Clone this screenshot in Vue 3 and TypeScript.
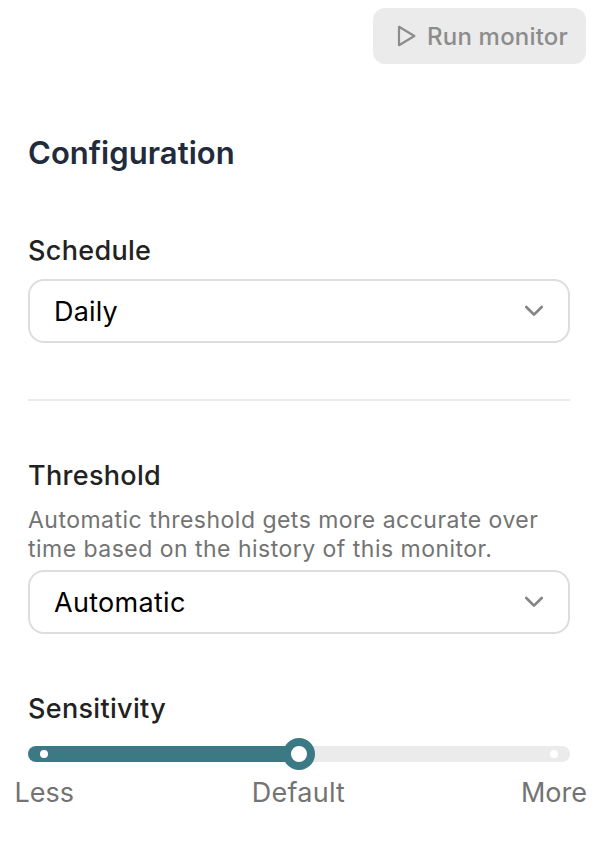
<script setup lang="ts">
import { ref } from 'vue'

const schedule = ref('Daily')
const threshold = ref('Automatic')
const sensitivity = ref(50)
</script>

<template>
  <main class="page">
    <header class="toolbar">
      <button class="run" disabled>
        <svg class="play" viewBox="0 0 20 24"><path d="M3 2.8V21.2L18.4 12Z" /></svg>
        <span class="run-label">Run monitor</span>
      </button>
    </header>
    <section class="config">
      <h1><span>Configuration</span></h1>
      <h2 class="schedule-title"><span>Schedule</span></h2>
      <button class="select">
        <span class="daily">{{ schedule }}</span>
        <svg class="chevron" viewBox="0 0 20 12"><path d="M2.3 2L10 9.6L17.7 2" /></svg>
      </button>
      <hr />
      <h2 class="threshold-title"><span>Threshold</span></h2>
      <p><span class="line-one">Automatic threshold gets more accurate over</span><br /><span class="line-two">time based on the history of this monitor.</span></p>
      <button class="select">
        <span class="automatic">{{ threshold }}</span>
        <svg class="chevron" viewBox="0 0 20 12"><path d="M2.3 2L10 9.6L17.7 2" /></svg>
      </button>
      <h2 class="sensitivity-title"><span>Sensitivity</span></h2>
      <div class="slider">
        <div class="track"><div class="fill" :style="{ width: sensitivity + '%' }"></div></div>
        <i class="dot start"></i><i class="dot end"></i>
        <i class="thumb" :style="{ left: sensitivity + '%' }"></i>
      </div>
      <div class="labels"><span class="less">Less</span><span class="default">Default</span><span class="more">More</span></div>
    </section>
  </main>
</template>

<style>
body { background: #fff; }
</style>

<style scoped>
* { box-sizing: border-box; }
.page { width: 610px; height: 856px; padding-top: 8px; overflow: hidden; font-family: Inter, sans-serif; }
.toolbar { display: flex; justify-content: flex-end; padding-right: 24px; }
button { font-family: inherit; margin: 0; }
.run { width: 213px; height: 56px; display: flex; align-items: center; padding: 0 0 0 23px; border: 0; border-radius: 12px; background: #ebebeb; color: #8c8c8c; font-size: 24px; font-weight: 500; letter-spacing: 0.2px; white-space: nowrap; }
.play { width: 20px; height: 24px; margin-right: 11px; fill: none; stroke: #8c8c8c; stroke-width: 2.2; stroke-linejoin: round; }
.config { width: 542px; margin-left: 28px; }
h1 { margin: 69px 0 0; font-size: 31px; line-height: 40px; font-weight: 600; color: #222b3b; }
h1 span { letter-spacing: 0.05px; }
h2 { margin: 0; font-size: 27px; line-height: 34px; font-weight: 500; letter-spacing: 0.32px; color: #222; }
.schedule-title { margin-top: 61px; }
.select { width: 542px; height: 64px; display: flex; align-items: center; justify-content: space-between; padding: 0 24px; border: 2px solid #ddd; border-radius: 16px; background: #fff; color: #000; font-size: 27px; }
.daily { letter-spacing: 0.15px; }
.automatic { letter-spacing: 0.3px; }
.schedule-title + .select { margin-top: 11px; }
.chevron { width: 20px; height: 12px; fill: none; stroke: #858585; stroke-width: 2.7; stroke-linecap: round; stroke-linejoin: round; }
hr { border: 0; height: 2px; background: #ebebeb; margin: 56px 0 0; }
.threshold-title { margin-top: 58px; }
p { margin: 13px 0 6px; font-size: 23px; line-height: 29px; letter-spacing: 0.48px; color: #737373; white-space: nowrap; }
.sensitivity-title { margin-top: 58px; }
.slider { height: 16px; position: relative; margin-top: 20px; }
.track { height: 16px; border-radius: 8px; overflow: hidden; background: #ebebeb; }
.fill { height: 100%; background: #3b7a85; }
.dot { position: absolute; top: 4px; width: 8px; height: 8px; border-radius: 50%; background: #fff; }
.start { left: 12px; }
.end { right: 12px; }
.thumb { position: absolute; top: -8px; width: 32px; height: 32px; margin-left: -16px; border: 8px solid #3b7a85; border-radius: 50%; background: #fff; }
.labels { display: flex; justify-content: space-between; margin: 14px -17px 0 -13.5px; font-size: 27px; line-height: 34px; color: #737373; }
.default { letter-spacing: 0.25px; padding-left: 2px; }
</style>
